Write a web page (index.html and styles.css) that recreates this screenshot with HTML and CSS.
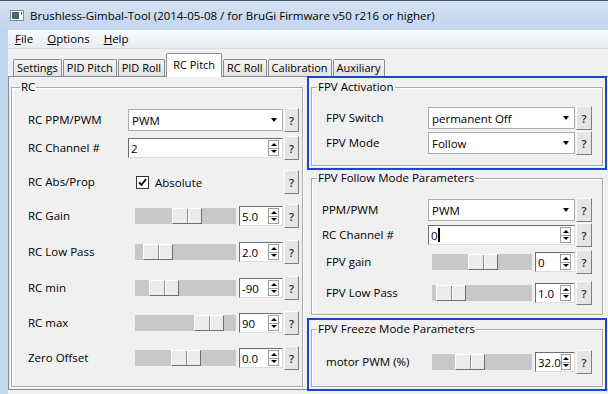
FILE: index.html
```html
<!DOCTYPE html>
<html lang="en">
<head>
    <meta charset="UTF-8">
    <title>Brushless-Gimbal-Tool</title>
    <link rel="stylesheet" href="styles.css">
</head>
<body>
<div class="window">

    <div class="titlebar">
        <svg class="app-icon" width="14" height="11" viewBox="0 0 14 11">
            <rect x="0.5" y="0.5" width="13" height="10" fill="#fff" stroke="#7b8a8c"/>
            <rect x="2" y="2" width="7" height="7" fill="#3b6d66"/>
            <rect x="11" y="2" width="1" height="3" fill="#4a5a5a"/>
        </svg>
        <span class="title">Brushless-Gimbal-Tool (2014-05-08 / for BruGi Firmware v50 r216 or higher)</span>
    </div>

    <div class="client">
        <div class="menubar">
            <span class="menu"><u>F</u>ile</span>
            <span class="menu"><u>O</u>ptions</span>
            <span class="menu"><u>H</u>elp</span>
        </div>

        <div class="tabstrip">
            <div class="tab">Settings</div>
            <div class="tab">PID Pitch</div>
            <div class="tab">PID Roll</div>
            <div class="tab active">RC Pitch</div>
            <div class="tab">RC Roll</div>
            <div class="tab">Calibration</div>
            <div class="tab">Auxiliary</div>
        </div>

        <div class="tabpane">

            <!-- RC -->
            <fieldset class="group rc-group">
                <legend>RC</legend>
                <div class="rows rc-rows">
                    <label>RC PPM/PWM</label>
                    <div class="combo"><span>PWM</span></div>
                    <button class="help">?</button>

                    <label>RC Channel #</label>
                    <div class="spin wide"><span class="val">2</span><span class="spin-btns"><span class="up"></span><span class="dn"></span></span></div>
                    <button class="help">?</button>

                    <label>RC Abs/Prop</label>
                    <div class="check">
                        <span class="box"><svg width="11" height="11" viewBox="0 0 11 11"><path d="M2 5.5l2.5 2.5 4.5-6" fill="none" stroke="#000" stroke-width="1.8"/></svg></span>
                        <span>Absolute</span>
                    </div>
                    <button class="help">?</button>

                    <label>RC Gain</label>
                    <div class="slide">
                        <div class="track"><span class="thumb" style="left:37px"></span></div>
                        <div class="spin"><span class="val">5.0</span><span class="spin-btns"><span class="up"></span><span class="dn"></span></span></div>
                    </div>
                    <button class="help">?</button>

                    <label>RC Low Pass</label>
                    <div class="slide">
                        <div class="track"><span class="thumb" style="left:8px"></span></div>
                        <div class="spin"><span class="val">2.0</span><span class="spin-btns"><span class="up"></span><span class="dn"></span></span></div>
                    </div>
                    <button class="help">?</button>

                    <label>RC min</label>
                    <div class="slide">
                        <div class="track"><span class="thumb" style="left:14px"></span></div>
                        <div class="spin"><span class="val">-90</span><span class="spin-btns"><span class="up"></span><span class="dn"></span></span></div>
                    </div>
                    <button class="help">?</button>

                    <label>RC max</label>
                    <div class="slide">
                        <div class="track"><span class="thumb" style="left:59px"></span></div>
                        <div class="spin"><span class="val">90</span><span class="spin-btns"><span class="up"></span><span class="dn"></span></span></div>
                    </div>
                    <button class="help">?</button>

                    <label>Zero Offset</label>
                    <div class="slide">
                        <div class="track"><span class="thumb" style="left:36px"></span></div>
                        <div class="spin"><span class="val">0.0</span><span class="spin-btns"><span class="up"></span><span class="dn"></span></span></div>
                    </div>
                    <button class="help">?</button>
                </div>
            </fieldset>

            <div class="right-col">

                <!-- FPV Activation -->
                <fieldset class="group marked">
                    <legend>FPV Activation</legend>
                    <div class="rows fpv-rows act-rows">
                        <label>FPV Switch</label>
                        <div class="combo"><span>permanent Off</span></div>
                        <button class="help">?</button>

                        <label>FPV Mode</label>
                        <div class="combo"><span>Follow</span></div>
                        <button class="help">?</button>
                    </div>
                </fieldset>

                <!-- FPV Follow Mode -->
                <fieldset class="group fpv-follow">
                    <legend>FPV Follow Mode Parameters</legend>
                    <div class="rows fpv-rows follow-rows">
                        <label class="tight">PPM/PWM</label>
                        <div class="combo"><span>PWM</span></div>
                        <button class="help">?</button>

                        <label class="tight">RC Channel #</label>
                        <div class="spin wide"><span class="val">0<span class="caret"></span></span><span class="spin-btns"><span class="up"></span><span class="dn"></span></span></div>
                        <button class="help">?</button>

                        <label>FPV gain</label>
                        <div class="slide">
                            <div class="track"><span class="thumb" style="left:36px"></span></div>
                            <div class="spin"><span class="val">0</span><span class="spin-btns"><span class="up"></span><span class="dn"></span></span></div>
                        </div>
                        <button class="help">?</button>

                        <label>FPV Low Pass</label>
                        <div class="slide">
                            <div class="track"><span class="thumb" style="left:4px"></span></div>
                            <div class="spin"><span class="val">1.0</span><span class="spin-btns"><span class="up"></span><span class="dn"></span></span></div>
                        </div>
                        <button class="help">?</button>
                    </div>
                </fieldset>

                <!-- FPV Freeze Mode -->
                <fieldset class="group marked fpv-freeze">
                    <legend>FPV Freeze Mode Parameters</legend>
                    <div class="rows fpv-rows freeze-rows">
                        <label>motor PWM (%)</label>
                        <div class="slide">
                            <div class="track"><span class="thumb" style="left:23px"></span></div>
                            <div class="spin"><span class="val">32.0</span><span class="spin-btns"><span class="up"></span><span class="dn"></span></span></div>
                        </div>
                        <button class="help">?</button>
                    </div>
                </fieldset>

            </div>
        </div>
    </div>
</div>
</body>
</html>
```

FILE: styles.css
```css
body {
    margin: 0;
    width: 608px;
    height: 394px;
    overflow: hidden;
    font-family: "Open Sans", "Noto Sans", sans-serif;
    font-size: 11.5px;
    color: #000;
    background-color: #c4d7ee;
}
.window {
    height: 393px;
    border-top: 1px solid #4a5666;
    background: linear-gradient(#d5e3f4, #c1d5ee 29px, #c6d9ef);
}
.titlebar {
    display: flex;
    align-items: center;
    gap: 6px;
    height: 29px;
    padding-left: 10px;
}
.client {
    width: 640px;
    height: 364px;
    margin-left: 8px;
    background-color: #f0f0f0;
}
.menubar {
    display: flex;
    height: 18px;
    border-bottom: 1px solid #d7dde6;
    background: linear-gradient(#fafcfe, #e6ecf4);
}
.menu {
    padding: 0 7px;
    line-height: 18px;
}
.tabstrip {
    display: flex;
    align-items: flex-end;
    gap: 1px;
    height: 23px;
    margin-top: 4px;
    padding-left: 5px;
}
.tab {
    height: 16px;
    padding: 0 3px;
    border: 1px solid #898c95;
    border-bottom: none;
    border-radius: 2px 2px 0 0;
    background: linear-gradient(#f4f4f4, #e2e2e2);
    font-size: 11px;
    line-height: 16px;
}
.tab.active {
    position: relative;
    height: 23px;
    margin-bottom: -1px;
    padding: 0 6px;
    background: #fff;
    line-height: 22px;
}
.tabpane {
    display: grid;
    grid-template-columns: 292px 292px;
    column-gap: 8px;
    height: 307px;
    padding: 3px 2px 2px;
    border: 1px solid #898c95;
}

/* group boxes */
.group {
    margin: 0;
    padding: 0;
    min-width: 0;
    border: 1px solid #a9a9a9;
    box-shadow: inset 1px 1px 0 #fff, 1px 1px 0 #fff;
}
.group legend {
    margin-left: 5px;
    padding: 0 1px;
    line-height: 14px;
    background-color: #f0f0f0;
}
.rc-group legend {
    margin-left: 8px;
}
.marked {
    outline: 2px solid #1f45c9;
    outline-offset: 2px;
}
.right-col {
    display: flex;
    flex-direction: column;
}
.fpv-follow {
    margin-top: 5px;
}
.fpv-freeze {
    margin-top: 7px;
}

/* rows */
.rows {
    display: grid;
    align-items: start;
    column-gap: 1px;
}
.rows label {
    line-height: 24px;
    white-space: nowrap;
}
.rc-rows {
    grid-template-columns: 99px 155px 15px;
    grid-template-rows: 28px 34px 34px 36px 36px 35px 35px 24px;
    padding: 14px 0 0 16px;
}
.fpv-rows {
    grid-template-columns: 101px 147px 16px;
    padding-left: 14px;
}
.act-rows {
    grid-template-rows: 25px 24px;
    padding-top: 12px;
    padding-bottom: 10px;
}
.follow-rows {
    grid-template-rows: 25px 27px 31px 24px;
    padding-top: 13px;
    padding-bottom: 9px;
}
.freeze-rows {
    grid-template-rows: 24px;
    padding-top: 14px;
    padding-bottom: 12px;
}
.tight {
    margin-left: -4px;
}

/* controls */
.combo {
    display: flex;
    align-items: center;
    justify-content: space-between;
    height: 20px;
    margin-top: 1px;
    padding: 0 5px 0 3px;
    border: 1px solid #abadb3;
    background: #fff;
}
.combo::after {
    content: "";
    border-top: 4px solid #000;
    border-left: 3.5px solid transparent;
    border-right: 3.5px solid transparent;
}
.help {
    width: 15px;
    height: 24px;
    padding: 0;
    border: 1px solid;
    border-color: #fcfcfc #7f7f7f #7f7f7f #fcfcfc;
    background: #e5e5e5;
    font-family: "Open Sans", sans-serif;
    font-size: 11px;
    font-weight: 600;
    color: #1a2444;
}
.fpv-rows .help {
    width: 16px;
}
.check {
    display: flex;
    align-items: center;
    gap: 6px;
    height: 24px;
    padding-left: 8px;
}
.check .box {
    display: flex;
    width: 11px;
    height: 11px;
    border: 1px solid #333;
    background: #fff;
}
.slide {
    display: flex;
    align-items: center;
    gap: 3px;
    height: 24px;
}
.track {
    position: relative;
    width: 101px;
    height: 16px;
    margin-left: 7px;
    background: #c8c8c8;
}
.fpv-rows .track {
    width: 100px;
    margin-left: 4px;
}
.thumb {
    position: absolute;
    top: 0;
    width: 30px;
    height: 16px;
    box-sizing: border-box;
    border: 1px solid;
    border-color: #fff #6f6f6f #6f6f6f #fff;
    background: #ececec;
}
.thumb::after {
    content: "";
    position: absolute;
    top: 0;
    bottom: 0;
    left: 14px;
    width: 1px;
    background: #8c8c8c;
    box-shadow: 1px 0 0 #fff;
}
.spin {
    display: flex;
    align-items: stretch;
    width: 44px;
    height: 20px;
    box-sizing: border-box;
    border: 1px solid;
    border-color: #6e6e6e #dcdcdc #dcdcdc #6e6e6e;
    background: #fff;
}
.fpv-rows .spin {
    width: 40px;
}
.spin.wide {
    width: auto;
    margin-top: 2px;
}
.spin .val {
    flex: 1;
    display: flex;
    align-items: center;
    padding-left: 2px;
}
.caret {
    display: inline-block;
    width: 2px;
    height: 14px;
    background: #000;
}
.spin-btns {
    display: flex;
    flex-direction: column;
    width: 9px;
    margin: 1px 3px 1px 0;
    border: 1px solid #9c9c9c;
}
.spin-btns span {
    flex: 1;
    display: flex;
    align-items: center;
    justify-content: center;
}
.spin-btns span + span {
    border-top: 1px solid #9c9c9c;
}
.spin-btns .up::after {
    content: "";
    border-bottom: 3px solid #000;
    border-left: 3px solid transparent;
    border-right: 3px solid transparent;
}
.spin-btns .dn::after {
    content: "";
    border-top: 3px solid #000;
    border-left: 3px solid transparent;
    border-right: 3px solid transparent;
}
```
